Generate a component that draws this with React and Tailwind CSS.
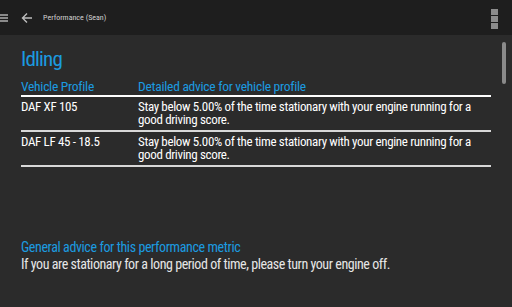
import React from 'react';

const rows = [
  { profile: 'DAF XF 105', advice: 'Stay below 5.00% of the time stationary with your engine running for a good driving score.' },
  { profile: 'DAF LF 45 - 18.5', advice: 'Stay below 5.00% of the time stationary with your engine running for a good driving score.' },
];

export default function App() {
  return (
    <div className="w-[512px] h-[307px] bg-[#2b2b2b] flex flex-col overflow-hidden font-['Roboto_Condensed',Roboto,sans-serif] font-stretch-condensed">
      {/* Top bar */}
      <div className="h-[35px] bg-[#1e1e1e] flex items-center relative shrink-0">
        <div className="w-[8px] flex flex-col gap-[1px] mt-[1px]">
          <div className="h-[2px] bg-[#8a8a8a]" />
          <div className="h-[2px] bg-[#8a8a8a]" />
          <div className="h-[2px] bg-[#8a8a8a]" />
        </div>
        <svg className="ml-[13px]" width="12" height="12" viewBox="0 0 12 12" fill="none" stroke="#bdbdbd" strokeWidth="1.4">
          <path d="M11 6H1.5M6 1.5L1.5 6L6 10.5" />
        </svg>
        <span className="ml-[10px] text-[8px] text-[#d0d0d0]">Performance (Sean)</span>
        <div className="ml-auto mr-[14px] mt-[3px] flex flex-col gap-[1px]">
          <div className="w-[7px] h-[6px] bg-[#8c8c8c]" />
          <div className="w-[7px] h-[6px] bg-[#8c8c8c]" />
          <div className="w-[7px] h-[6px] bg-[#8c8c8c]" />
        </div>
      </div>

      {/* Content */}
      <div className="flex-1 relative px-[21px] pt-[12px]">
        <div className="absolute right-[6px] top-[7px] w-[4px] h-[42px] rounded-full bg-[#8a8a8a]" />
        <h1 className="text-[21px] leading-[24px] tracking-[-0.8px] text-[#1b9be0]">Idling</h1>
        <div className="w-[470px] mt-[8px]">
          <div className="flex text-[13.5px] leading-[15px] tracking-[-0.27px] text-[#1b9be0] border-b-2 border-white pb-[1px]">
            <div className="w-[117px]">Vehicle Profile</div>
            <div className="flex-1">Detailed advice for vehicle profile</div>
          </div>
          {rows.map((r, i) => (
            <div key={i} className="flex text-[13px] leading-[13px] tracking-[-0.35px] text-white border-b-2 border-[#d8d8d8] pt-[3px] pb-[4px]">
              <div className="w-[117px]">{r.profile}</div>
              <div className="flex-1 pr-[10px]">{r.advice}</div>
            </div>
          ))}
        </div>
        <div className="mt-[72px] text-[14px] leading-[17px] tracking-[-0.4px] text-[#1b9be0]">General advice for this performance metric</div>
        <div className="text-[14px] leading-[17px] tracking-[-0.45px] text-[#e6e6e6]">If you are stationary for a long period of time, please turn your engine off.</div>
      </div>
    </div>
  );
}
